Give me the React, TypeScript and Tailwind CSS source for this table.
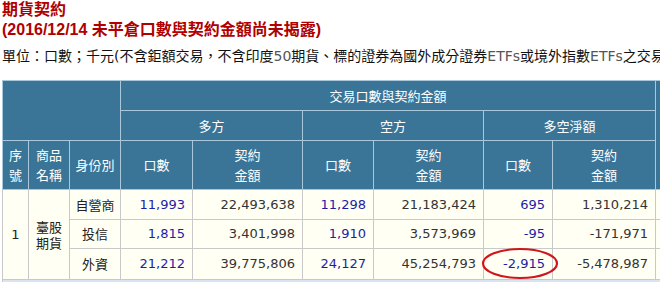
import React from "react";

const cjk = '"Noto Sans CJK TC", "Noto Sans", sans-serif';
const num = '"DejaVu Sans", "Noto Sans CJK TC", sans-serif';

const H = "bg-[#3a7598] text-white font-normal border border-[#a9c8dc] text-center align-middle p-0";
const D = "bg-[#fffff3] border border-[#c9c9c9] p-0 align-middle";

type Row = { who: string; a: string; b: string; c: string; d: string; e: string; f: string };
const rows: Row[] = [
  { who: "自營商", a: "11,993", b: "22,493,638", c: "11,298", d: "21,183,424", e: "695", f: "1,310,214" },
  { who: "投信", a: "1,815", b: "3,401,998", c: "1,910", d: "3,573,969", e: "-95", f: "-171,971" },
  { who: "外資", a: "21,212", b: "39,775,806", c: "24,127", d: "45,254,793", e: "-2,915", f: "-5,478,987" },
];
const heights = ["h-[30px]", "h-[29px]", "h-[31px]"];

export default function App() {
  return (
    <div className="relative w-[660px] h-[282px] overflow-hidden bg-white pl-[2px]" style={{ fontFamily: cjk }}>
      <div className="text-[16px] leading-[20px] font-bold text-[#b00000]" style={{ fontFamily: '"Liberation Sans", "Noto Sans CJK TC", sans-serif' }}>
        期貨契約
      </div>
      <div className="text-[16px] leading-[20px] font-bold text-[#b00000] whitespace-nowrap" style={{ fontFamily: '"Liberation Sans", "Noto Sans CJK TC", sans-serif' }}>
        (2016/12/14 未平倉口數與契約金額尚未揭露)
      </div>
      <div className="mt-[6px] text-[14px] leading-[20px] text-[#111] whitespace-nowrap" style={{ fontFamily: '"DejaVu Sans", "Noto Sans CJK TC", sans-serif' }}>
        單位：口數；千元(不含鉅額交易，不含印度<span className="text-[#555]">50</span>期貨、標的證券為國外成分證券<span className="text-[#555]">ETFs</span>或境外指數<span className="text-[#555]">ETFs</span>之交易)
      </div>
      <table className="mt-[14px] border-collapse table-fixed w-[733px] text-[13px]">
        <colgroup>
          <col className="w-[26px]" />
          <col className="w-[41px]" />
          <col className="w-[51px]" />
          <col className="w-[72px]" />
          <col className="w-[110px]" />
          <col className="w-[71px]" />
          <col className="w-[110px]" />
          <col className="w-[69px]" />
          <col className="w-[103px]" />
          <col className="w-[80px]" />
        </colgroup>
        <thead>
          <tr className="h-[30px]">
            <th className={H} colSpan={3} rowSpan={2}></th>
            <th className={H} colSpan={6}>交易口數與契約金額</th>
            <th className={H} rowSpan={3}></th>
          </tr>
          <tr className="h-[30px]">
            <th className={H} colSpan={2}>多方</th>
            <th className={H} colSpan={2}>空方</th>
            <th className={H} colSpan={2}>多空淨額</th>
          </tr>
          <tr className="h-[49px] leading-[20px]">
            <th className={H}>序<br />號</th>
            <th className={H}>商品<br />名稱</th>
            <th className={H}>身份別</th>
            <th className={H}>口數</th>
            <th className={H}>契約<br />金額</th>
            <th className={H}>口數</th>
            <th className={H}>契約<br />金額</th>
            <th className={H}>口數</th>
            <th className={H}>契約<br />金額</th>
          </tr>
        </thead>
        <tbody>
          {rows.map((r, i) => (
            <tr key={r.who} className={heights[i]}>
              {i === 0 && (
                <>
                  <td className={`${D} text-center text-[#222]`} rowSpan={3} style={{ fontFamily: num }}>1</td>
                  <td className={`${D} text-center text-[#222] leading-[16px]`} rowSpan={3}>臺股<br />期貨</td>
                </>
              )}
              <td className={`${D} text-center text-[#222]`}>{r.who}</td>
              <td className={`${D} text-right pr-[7px] text-[#1d1da8]`} style={{ fontFamily: num }}>{r.a}</td>
              <td className={`${D} text-right pr-[7px] text-[#333]`} style={{ fontFamily: num }}>{r.b}</td>
              <td className={`${D} text-right pr-[7px] text-[#1d1da8]`} style={{ fontFamily: num }}>{r.c}</td>
              <td className={`${D} text-right pr-[7px] text-[#333]`} style={{ fontFamily: num }}>{r.d}</td>
              <td className={`${D} text-right pr-[7px] text-[#1d1da8]`} style={{ fontFamily: num }}>{r.e}</td>
              <td className={`${D} text-right pr-[7px] text-[#333]`} style={{ fontFamily: num }}>{r.f}</td>
              <td className={D}></td>
            </tr>
          ))}
          <tr className="h-[20px]">
            <td className="bg-[#d8e5f0] border border-[#c9c9c9]" colSpan={10}></td>
          </tr>
        </tbody>
      </table>
      <svg className="absolute left-[481px] top-[247px]" width="80" height="34" viewBox="0 0 80 34">
        <ellipse cx="39" cy="16.5" rx="37" ry="14.5" fill="none" stroke="#d0151c" strokeWidth="2.2" />
      </svg>
    </div>
  );
}
